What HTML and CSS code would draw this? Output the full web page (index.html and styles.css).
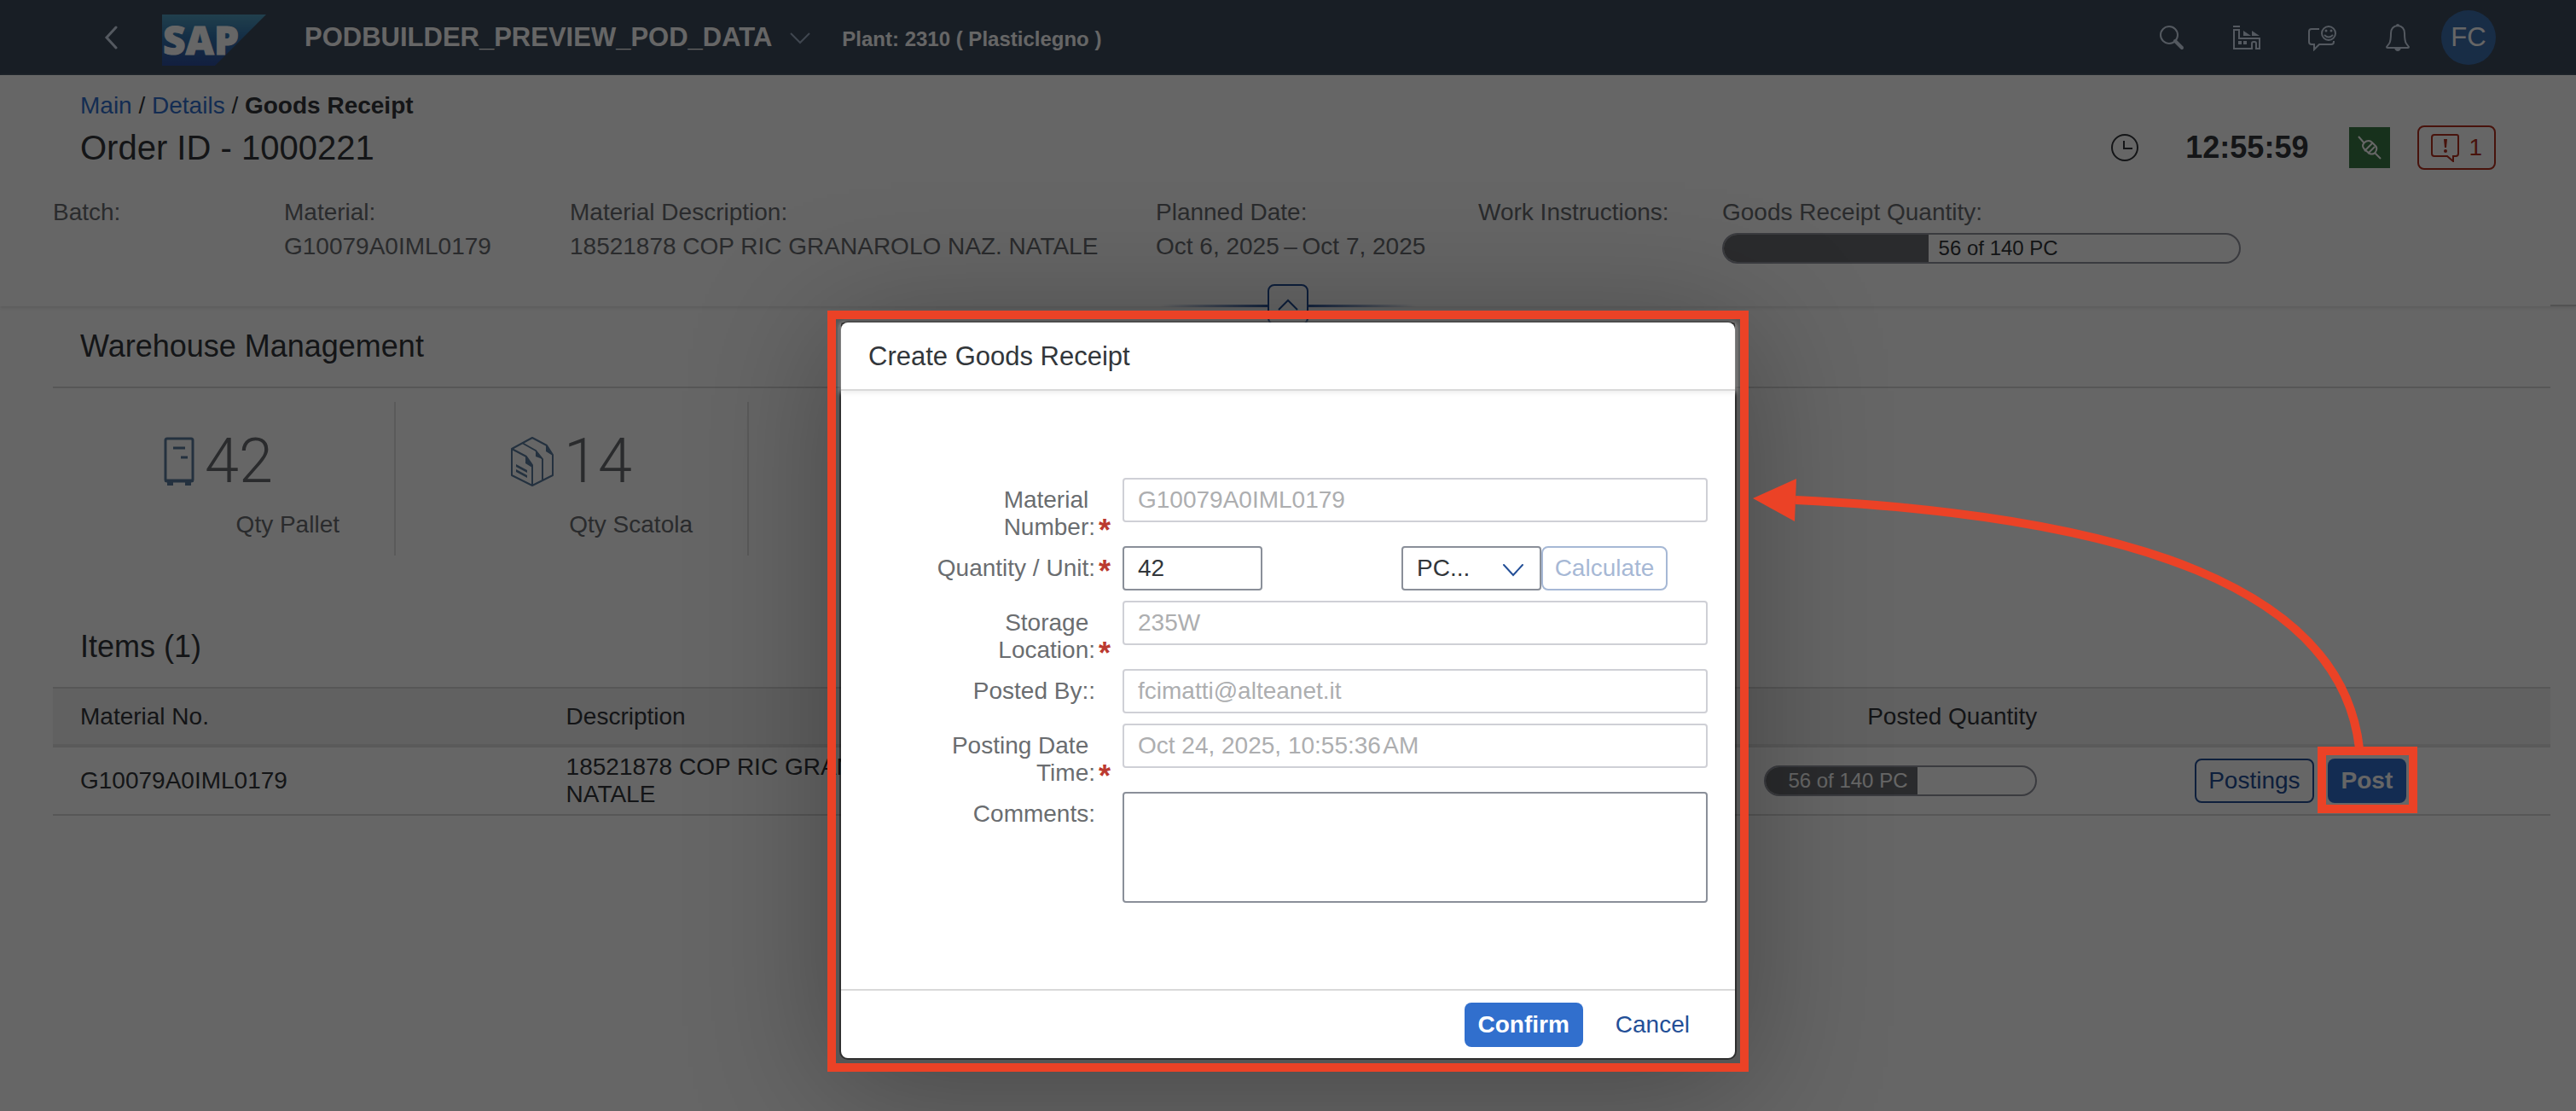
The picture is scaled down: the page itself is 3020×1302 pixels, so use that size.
FILE: index.html
```html
<!DOCTYPE html>
<html lang="en">
<head>
<meta charset="utf-8">
<title>Goods Receipt</title>
<link rel="stylesheet" href="styles.css">
</head>
<body>
<div class="page">
  <header class="shell">
    <button class="shell-btn back" type="button" aria-label="Back">
      <svg width="16" height="28" viewBox="0 0 16 28"><path d="M14 2L3 14l11 12" fill="none" stroke="currentColor" stroke-width="3" stroke-linecap="round"/></svg>
    </button>
    <svg class="logo" width="122" height="60" viewBox="0 0 122 60" role="img" aria-label="SAP">
      <defs><linearGradient id="sap" x1="0" y1="0" x2="0" y2="1"><stop offset="0" stop-color="#529fc0"/><stop offset=".45" stop-color="#3273ae"/><stop offset="1" stop-color="#2f4f9f"/></linearGradient></defs>
      <path d="M0 0h122L62 60H0z" fill="url(#sap)"/>
      <text class="logo-text" x="1" y="47">SAP</text>
    </svg>
    <button class="shell-title" type="button">PODBUILDER_PREVIEW_POD_DATA
      <svg width="26" height="16" viewBox="0 0 26 16"><path d="M2 3l11 11L24 3" fill="none" stroke="#9fb0c6" stroke-width="2"/></svg>
    </button>
    <span class="plant">Plant: 2310 ( Plasticlegno )</span>
    <div class="shell-tools">
      <button class="shell-btn" type="button" aria-label="Search">
        <svg width="32" height="32" viewBox="0 0 32 32"><circle cx="13" cy="13" r="10" fill="none" stroke="currentColor" stroke-width="2"/><path d="M20 20l8 8" stroke="currentColor" stroke-width="4" stroke-linecap="round"/></svg>
      </button>
      <button class="shell-btn" type="button" aria-label="Plant">
        <svg width="32" height="32" viewBox="0 0 32 32"><path d="M0 3h8M1 7v22h21v-6q0-2 2-2h1q2 0 2 2v6h4V17H7V7z" fill="none" stroke="currentColor" stroke-width="2"/><path d="M12 8l9 6h-9zM22 8l9 6h-9zM6 20h4v4H6zM12 20h4v4h-4z" fill="currentColor"/></svg>
      </button>
      <button class="shell-btn" type="button" aria-label="Feedback">
        <svg width="34" height="32" viewBox="0 0 34 32"><g fill="none" stroke="currentColor" stroke-width="2"><path d="M13 6H4Q1 6 1 9v12q0 3 3 3h3v6l6-6h14q3 0 3-3v-1"/><circle cx="24" cy="11" r="8"/><path d="M19 13q5 5 10 0"/></g><circle cx="21" cy="8" r="1.5" fill="currentColor"/><circle cx="27" cy="8" r="1.5" fill="currentColor"/></svg>
      </button>
      <button class="shell-btn" type="button" aria-label="Notifications">
        <svg width="30" height="34" viewBox="0 0 30 34"><path d="M15 3q-8 1-8 9 0 9-2 12l-3 4q0 1 1 1h24q1 0 1-1l-3-4q-2-3-2-12 0-8-8-9z" fill="none" stroke="currentColor" stroke-width="2"/><path d="M13 3a2 2 0 0 1 4 0zM11 29h8q-1 4-4 4t-4-4z" fill="currentColor"/></svg>
      </button>
      <button class="avatar" type="button">FC</button>
    </div>
  </header>

  <section class="order-head">
    <nav class="crumbs" aria-label="Breadcrumb"><a href="#">Main</a> / <a href="#">Details</a> / <strong>Goods Receipt</strong></nav>
    <div class="title-row">
      <h1>Order ID - 1000221</h1>
      <svg class="clock-icon" width="34" height="34" viewBox="0 0 34 34"><circle cx="17" cy="17" r="15" fill="none" stroke="currentColor" stroke-width="2"/><path d="M16 9v9h10" fill="none" stroke="currentColor" stroke-width="2"/></svg>
      <span class="clock">12:55:59</span>
      <span class="link-state">
        <svg width="28" height="28" viewBox="0 0 28 28"><g fill="none" stroke="currentColor" stroke-width="2"><path d="M1 1l7 8M20 20l7 7"/><path d="M6 12q0-2 2-4t5-2q2 0 4 2l4 4q2 2 1 5t-3 4-5 0l-6-5q-2-2-2-4zM17 9L8 18M20 13l-8 8"/></g></svg>
      </span>
      <button class="alert-btn" type="button">
        <svg width="34" height="34" viewBox="0 0 34 34"><path d="M4 2h26q2 0 2 2v20q0 3-3 3h-3v6l-7-6H4q-3 0-3-3V5q0-3 3-3z" fill="none" stroke="currentColor" stroke-width="2"/><path d="M15 7h4l-1 10h-2z" fill="currentColor"/><circle cx="17" cy="21" r="2" fill="currentColor"/></svg>1
      </button>
    </div>
    <dl class="facts">
      <div><dt>Batch:</dt></div>
      <div><dt>Material:</dt><dd>G10079A0IML0179</dd></div>
      <div><dt>Material Description:</dt><dd>18521878 COP RIC GRANAROLO NAZ. NATALE</dd></div>
      <div><dt>Planned Date:</dt><dd>Oct 6, 2025&#8201;–&#8201;Oct 7, 2025</dd></div>
      <div><dt>Work Instructions:</dt></div>
      <div><dt>Goods Receipt Quantity:</dt><dd class="bar"><span class="bar-fill" style="width:40%"></span><span class="bar-text">56 of 140 PC</span></dd></div>
    </dl>
    <div class="collapse">
      <button type="button" aria-label="Collapse header"><svg width="26" height="16" viewBox="0 0 26 16"><path d="M2 14L13 3l11 11" fill="none" stroke="currentColor" stroke-width="2"/></svg></button>
    </div>
  </section>

  <main class="content">
    <h2 class="bar-title ruled">Warehouse Management</h2>
    <div class="tiles">
      <div class="tile">
        <div class="tile-value">
          <svg width="36" height="58" viewBox="0 0 36 58"><rect x="2" y="2" width="32" height="50" rx="2" fill="none" stroke="currentColor" stroke-width="3"/><path d="M1 51h34M11 13h14M20 24h8" stroke="currentColor" stroke-width="3" fill="none"/><path d="M4 52h7v5H4zM25 52h7v5h-7z" fill="currentColor"/></svg>
          42
        </div>
        <div class="tile-label">Qty Pallet</div>
      </div>
      <div class="tile">
        <div class="tile-value">
          <svg width="50" height="58" viewBox="0 0 50 58"><path d="M1 14L25 1l17 9 7 11v24L25 57 1 45zM1 14l17 9 7 10v24M13 7l16 9 8 10v24" fill="none" stroke="currentColor" stroke-width="2" stroke-linejoin="round"/><path d="M17 22l8 10v4l-8-5zM29 15l8 11-8-3zM41 9l8 13-8-5zM6 32l13 7v3L6 35zM6 38l13 7v3L6 41z" fill="currentColor"/></svg>
          14
        </div>
        <div class="tile-label">Qty Scatola</div>
      </div>
    </div>

    <h2 class="bar-title">Items (1)</h2>
    <table class="items">
      <thead>
        <tr><th>Material No.</th><th>Description</th><th></th><th class="num">Posted Quantity</th><th></th></tr>
      </thead>
      <tbody>
        <tr>
          <td>G10079A0IML0179</td>
          <td>18521878 COP RIC GRANAROLO NAZ. NATALE</td>
          <td></td>
          <td><div class="bar small"><span class="bar-fill" style="width:57%">56 of 140 PC</span></div></td>
          <td><div class="actions"><button class="btn outlined" type="button">Postings</button><button class="btn filled" type="button">Post</button></div></td>
        </tr>
      </tbody>
    </table>
  </main>
</div>

<div class="overlay">
  <div class="callout">
    <form class="dialog" role="dialog" aria-labelledby="dlg-title">
      <h2 id="dlg-title" class="dialog-title">Create Goods Receipt</h2>
      <div class="dialog-body">
        <div class="row"><label class="req" for="mat">Material&nbsp;<br>Number:</label><input id="mat" class="field" type="text" value="G10079A0IML0179" disabled></div>
        <div class="row"><label class="req" for="qty">Quantity / Unit:</label>
          <div class="qty-unit">
            <input id="qty" class="field" type="text" value="42">
            <div class="unit"><select class="field" aria-label="Unit"><option>PC...</option></select>
              <svg width="26" height="16" viewBox="0 0 26 16"><path d="M2 2l11 12L24 2" fill="none" stroke="#234f97" stroke-width="2" stroke-linecap="round"/></svg></div>
            <button class="btn outlined" type="button" disabled>Calculate</button>
          </div>
        </div>
        <div class="row"><label class="req" for="loc">Storage&nbsp;<br>Location:</label><input id="loc" class="field" type="text" value="235W" disabled></div>
        <div class="row"><label for="by">Posted By::</label><input id="by" class="field" type="text" value="fcimatti@alteanet.it" disabled></div>
        <div class="row"><label class="req" for="when">Posting Date&nbsp;<br>Time:</label><input id="when" class="field" type="text" value="Oct 24, 2025, 10:55:36&#8202;AM" disabled></div>
        <div class="row"><label for="note">Comments:</label><textarea id="note" class="field"></textarea></div>
      </div>
      <footer class="dialog-foot">
        <button class="btn filled" type="button">Confirm</button>
        <button class="btn plain" type="button">Cancel</button>
      </footer>
    </form>
  </div>
  <div class="post-mark"></div>
  <svg class="arrow" width="720" height="320" viewBox="0 0 720 320">
    <path d="M50 26C445 45 690 130 711 317" fill="none" stroke="#eb4226" stroke-width="10"/>
    <path d="M0 24L51 1l-2 50z" fill="#eb4226"/>
  </svg>
</div>
</body>
</html>
```

FILE: styles.css
```css
* { box-sizing: border-box; }

body {
  margin: 0;
  background: #fff;
  color: #32363a;
  font: 28px/32px "Liberation Sans", Arial, sans-serif;
}

button, input, select, textarea { font: inherit; color: inherit; margin: 0; }
button { background: none; border: 0; padding: 0; }
h1, h2, dl, dd { margin: 0; font-weight: 400; }
svg { display: block; flex: none; }

.page { min-height: 100vh; }

/* Shell bar */
.shell {
  display: flex;
  align-items: center;
  height: 88px;
  padding: 0 94px 0 122px;
  background: #3c4b5c;
  color: #fff;
}
.shell-btn { color: #d1dff0; }
.logo { margin: 6px 45px 0 52px; }
.logo-text { font: 800 46px "Open Sans", sans-serif; fill: #fff; stroke: #fff; stroke-width: 1px; }
.shell-title {
  display: flex;
  align-items: center;
  gap: 20px;
  font-size: 31px;
  font-weight: 700;
}
.plant { margin: 4px 0 0 36px; font-size: 24px; font-weight: 700; }
.shell-tools { display: flex; align-items: center; gap: 56px; margin-left: auto; }
.avatar {
  width: 64px;
  height: 64px;
  margin-left: -20px;
  border-radius: 50%;
  background: #3e70b0;
  font-size: 31px;
}

/* Order header */
.order-head {
  position: relative;
  height: 271px;
  padding: 20px 94px 0;
  box-shadow: 0 2px 4px #e4e4e4;
}
.crumbs a { color: #316fcd; text-decoration: none; }
.title-row { display: flex; align-items: center; height: 52px; margin-top: 7px; }
.title-row h1 { margin-right: auto; font-size: 40px; }
.clock { margin: 0 48px 0 54px; font-size: 36px; font-weight: 700; }
.link-state {
  display: grid;
  place-items: center;
  width: 48px;
  height: 48px;
  margin-right: 32px;
  background: #3a7a46;
  color: #fff;
}
.alert-btn {
  display: flex;
  align-items: center;
  gap: 10px;
  height: 52px;
  padding: 0 14px;
  border: 2px solid #b4301f;
  border-radius: 8px;
  color: #b4301f;
}
.facts {
  display: grid;
  grid-template-columns: 271px 335px 687px 378px 286px 608px;
  margin: 34px -32px 0;
  color: #6a6d70;
}
.facts dd { margin-top: 8px; white-space: nowrap; }
.bar {
  display: flex;
  height: 36px;
  border: 2px solid #92939f;
  border-radius: 18px;
  overflow: hidden;
  font-size: 24px;
  line-height: 32px;
  color: #32363a;
}
.bar-fill { margin: -2px 0 -2px -2px; background: #6a6d70; flex: none; }
.bar-text { padding-left: 12px; }
.small { width: 320px; margin-left: auto; }
.small .bar-fill { padding-left: 28px; line-height: 36px; color: #fff; }

.collapse {
  position: absolute;
  left: 0;
  right: 0;
  bottom: -22px;
  display: flex;
  justify-content: center;
  background:
    linear-gradient(90deg, transparent, #234f97 45%, #234f97 55%, transparent) 50% 24px / 300px 3px no-repeat,
    linear-gradient(#d0d0d0, #d0d0d0) 100% 24px / 30px 2px no-repeat;
}
.collapse button {
  display: grid;
  place-items: center;
  width: 48px;
  height: 48px;
  border: 2px solid #234f97;
  border-radius: 8px;
  background: #fff;
  color: #234f97;
}

/* Content */
.content { padding: 0 30px 0 62px; }
.bar-title { height: 94px; padding: 0 32px; font-size: 36px; line-height: 94px; }
.ruled { height: 96px; border-bottom: 2px solid #d9d9d9; }
.tiles { display: flex; margin: 16px 0 60px -12px; }
.tile { width: 414px; height: 180px; padding-top: 34px; border-right: 2px solid #e2e2e2; }
.tile-value {
  display: flex;
  align-items: center;
  justify-content: center;
  gap: 12px;
  height: 72px;
  color: #6a6d70;
  font: 300 72px/72px Roboto, sans-serif;
}
.tile-value svg { color: #5b7c9e; }
.tile-label { padding: 22px 64px 0 0; text-align: right; color: #6a6d70; }

.items { width: 100%; table-layout: fixed; border-collapse: collapse; text-align: left; }
.items th {
  height: 68px;
  padding: 0 16px;
  border-top: 2px solid #d9d9d9;
  border-bottom: 4px solid #e2e2e2;
  background: #f2f2f2;
  font-weight: 400;
}
.items td { height: 81px; padding: 0 16px; border-bottom: 2px solid #d9d9d9; }
.items th:first-child, .items td:first-child { padding-left: 32px; }
.items .num { text-align: right; }
.actions { display: flex; justify-content: center; gap: 16px; }

.btn { height: 52px; padding: 0 14px; border: 2px solid transparent; border-radius: 8px; }
.btn.outlined { border-color: #234f97; color: #234f97; }
.btn.filled { background: #316fcd; color: #fff; font-weight: 700; }
.btn.plain { color: #234f97; }
.btn:disabled { opacity: .4; }

/* Dialog over dimmed page */
.overlay {
  position: absolute;
  inset: 0;
  display: flex;
  justify-content: center;
  align-items: flex-start;
  padding-top: 364px;
  background: rgba(0, 0, 0, .6);
  overflow: hidden;
}
.callout {
  border: 10px solid #eb4226;
  padding: 4px 6px 6px;
  background: rgba(0, 0, 0, .15) padding-box;
  box-shadow: 0 20px 150px rgba(0, 0, 0, .3);
}
.dialog {
  width: 1048px;
  border-radius: 8px;
  background: #fff;
  box-shadow: 0 0 0 2px rgba(0, 0, 0, .45);
}
.dialog-title {
  height: 80px;
  padding: 0 32px;
  border-bottom: 2px solid #d9d9d9;
  box-shadow: 0 2px 6px #ececec;
  font-size: 31px;
  line-height: 80px;
}
.dialog-body { padding: 102px 32px 89px; }
.row { display: grid; grid-template-columns: 298px 1fr; align-items: start; padding-bottom: 6px; }
.row label { position: relative; padding: 10px 32px 0 0; text-align: right; color: #6a6d70; }
.req::after {
  content: "*";
  position: absolute;
  right: 14px;
  bottom: -4px;
  color: #bb3a30;
  font-size: 36px;
  font-weight: 700;
}
.field {
  display: block;
  width: 100%;
  height: 52px;
  margin-bottom: 6px;
  padding: 0 16px;
  border: 2px solid #8a8f99;
  border-radius: 4px;
  background: #fff;
}
.field:disabled { border-color: #cfd0d6; color: #adaeb0; }
textarea.field { height: 130px; resize: none; }
.qty-unit { display: grid; grid-template-columns: 164px 163px 164px 148px; }
.qty-unit .unit { grid-column: 3; }
.qty-unit .btn { padding: 0; }
.unit { position: relative; }
.unit select { appearance: none; }
.unit svg { position: absolute; right: 20px; top: 20px; pointer-events: none; }
.dialog-foot {
  display: flex;
  justify-content: flex-end;
  gap: 22px;
  padding: 14px 37px 13px;
  border-top: 2px solid #d9d9d9;
}

/* Guide marks */
.post-mark {
  position: absolute;
  right: 186px;
  top: 875px;
  width: 117px;
  height: 78px;
  border: 10px solid #eb4226;
}
.arrow { position: absolute; right: 245px; top: 560px; }
```
